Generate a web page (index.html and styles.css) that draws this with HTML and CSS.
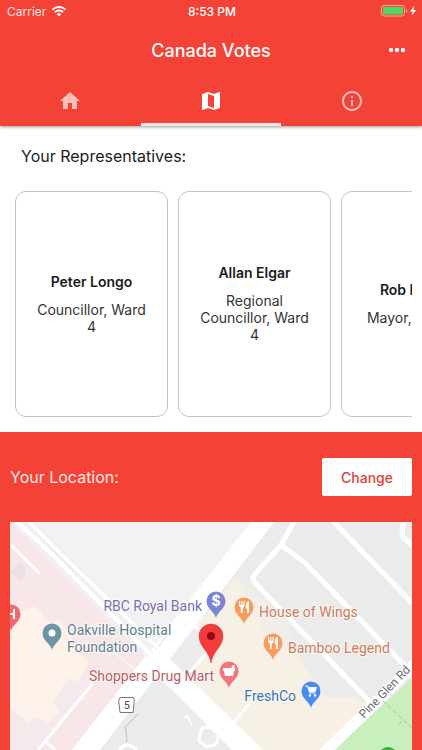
FILE: index.html
```html
<!DOCTYPE html>
<html lang="en">
<head>
  <meta charset="UTF-8" />
  <meta name="viewport" content="width=device-width, initial-scale=1.0" />
  <title>Canada Votes</title>
  <link rel="stylesheet" href="styles.css">
</head>
<body>
  <header class="app-header">
    <div class="status-bar">
      <div class="carrier">
        <span>Carrier</span>
        <svg width="16" height="12" viewBox="0 0 16 12">
          <g fill="none" stroke="#fff" stroke-width="2">
            <path d="M1.5 4.6a9.2 9.2 0 0 1 13 0" />
            <path d="M4 7.2a5.7 5.7 0 0 1 8 0" />
          </g>
          <path d="M8 11.5L5.8 9.2a3.1 3.1 0 0 1 4.4 0z" fill="#fff" />
        </svg>
      </div>
      <div class="clock">8:53 PM</div>
      <div class="battery">
        <svg width="36" height="12" viewBox="0 0 36 12">
          <rect x="0.5" y="0.5" width="23" height="10.5" rx="2.5" fill="none" stroke="#fba79e" />
          <rect x="2" y="2" width="20" height="7.5" rx="1" fill="#4cd964" />
          <path d="M25 4v4q1.300-.6 1.300-2T25 4z" fill="#fba79e" />
          <path d="M33.300 1L29 6.500h2.600L30.700 10.700 35.200 5h-2.800z" fill="#fff" />
        </svg>
      </div>
    </div>

    <div class="title-bar">
      <h1>Canada Votes</h1>
      <button class="more" aria-label="More">
        <svg width="18" height="6" viewBox="0 0 18 6" fill="#fff">
          <circle cx="3" cy="3" r="2.2" />
          <circle cx="9" cy="3" r="2.2" />
          <circle cx="15" cy="3" r="2.2" />
        </svg>
      </button>
    </div>

    <nav class="tabs">
      <a href="#home" aria-label="Home">
        <svg width="24" height="24" viewBox="0 0 24 24"><path d="M10 20v-6h4v6h5v-8h3L12 3 2 12h3v8z" /></svg>
      </a>
      <a href="#map" class="active" aria-label="Map">
        <svg width="24" height="24" viewBox="0 0 24 24"><path d="M20.500 3l-.16.030L15 5.100 9 3 3.360 4.900c-.21.070-.36.250-.36.480V20.500c0 .28.220.5.500.5l.16-.030L9 18.900l6 2.100 5.640-1.900c.21-.070.360-.250.360-.48V3.500c0-.28-.22-.5-.5-.5zM15 19l-6-2.110V5l6 2.110V19z" /></svg>
      </a>
      <a href="#info" aria-label="Info">
        <svg width="24" height="24" viewBox="0 0 24 24"><path d="M11 17h2v-6h-2v6zm1-15C6.480 2 2 6.480 2 12s4.480 10 10 10 10-4.480 10-10S17.520 2 12 2zm0 18c-4.410 0-8-3.590-8-8s3.590-8 8-8 8 3.590 8 8-3.590 8-8 8zM11 9h2V7h-2v2z" /></svg>
      </a>
    </nav>
  </header>

  <main>
    <section class="representatives">
      <h2>Your Representatives:</h2>
      <div class="card-row">
        <article class="card">
          <h3>Peter Longo</h3>
          <p>Councillor, Ward 4</p>
        </article>
        <article class="card">
          <h3>Allan Elgar</h3>
          <p>Regional Councillor, Ward 4</p>
        </article>
        <article class="card">
          <h3>Rob Burton</h3>
          <p>Mayor, Oakville</p>
        </article>
      </div>
    </section>

    <section class="location">
      <div class="location-bar">
        <h2>Your Location:</h2>
        <button class="change">Change</button>
      </div>

      <svg class="map" viewBox="0 0 402 228">
        <defs>
          <path id="pin" d="M0 17C-1 11-9.500 8-9.500 0a9.500 9.500 0 0 1 19 0C9.500 8 1 11 0 17z" />
          <g id="fork" fill="#fff">
            <path d="M-5-6h1.200v4h1v-4h1.200v4h1v-4H.6v4.500Q.4 0-1.200.4V6h-2V.4Q-4.800 0-5-1.500z" />
            <path d="M5-6v12H3V1.500H1.800V-3Q2.200-5.500 5-6z" />
          </g>
        </defs>

        <!-- blocks -->
        <rect width="402" height="228" fill="#f2f2f2" />
        <path d="M264 0H402V228H90L162 136z" fill="#ebebeb" />
        <path d="M0 0L137 136 62 228H0z" fill="#f7e7e9" />
        <path d="M83 158L28 228H0V140z" fill="#f4eaec" />
        <path d="M0 93l25-9 16 18 7-5 14 16-2 10 19 17-11 20-10-4-15 24 6 10-11 11-11-6-9 6-11-10-7-5z" fill="#fef3ea" />
        <path d="M4 45l6-6 5 5v10l-5 5-10-9z" fill="#e9e1e4" />
        <path d="M226 55l25 50 43 38 22 32q10 2 28 0l15 8-48 45h-60L190 168l-8-16 18-22-16-25z" fill="#f7f0e4" />
        <path d="M226 55l22 48 46 40-20-50z" fill="#f7f0e4" opacity="0.5" />
        <path d="M402 156V228H324z" fill="#c9efbd" />

        <!-- roads -->
        <path d="M241 0h23L90 228H62z" fill="#fff" />
        <path d="M134 130L155 132 253 228H222L140 146z" fill="#fff" />
        <path d="M148 125l9-12" stroke="#dedede" />
        <g fill="none" stroke="#e6e4e5">
          <path d="M3-4L45 35 141 133" stroke-width="6" />
          <path d="M15-4L50 31 148 126" stroke-width="5" />
        </g>
        <g fill="none" stroke="#fff">
          <path d="M3-4L45 35 141 133" stroke-width="5" />
          <path d="M15-4L50 31 148 126" stroke-width="4" />
        </g>
        <g fill="none" stroke="#fff" stroke-width="3" stroke-linejoin="round">
          <path d="M0 22l29 29" stroke-linecap="round" />
          <path d="M83 161L28 228M34 219l12 9" />
          <path d="M98 126l28 22" stroke-width="1" />
          <path d="M223 201l17-20M183 103l12 9M180 150l22-25" />
          <path d="M182 203l-5-9-3 2" stroke-width="2" />
          <path d="M213 201l20 20M190 211l3-6 10 1 6 6-3 10-9 3-8-6zM109 228q8-10 18 0" />
        </g>
        <g fill="none" stroke="#fff" stroke-width="5" stroke-linejoin="round">
          <path d="M285-2L271 23l-26 29q-4 5 0 9L363 183" />
          <path d="M271 23l23 17L397 146M322-2l80 83M394-2l-2 12q0 4 3 7l8 7" />
        </g>
        <path d="M312 233L406 141" stroke="#fff" stroke-width="11" />
        <path d="M128 193q2-3-7 6t-5 8l1 13" fill="none" stroke="#a9cfae" />
        <path d="M373 179l29 27M389 202l4-4" fill="none" stroke="#9db897" stroke-dasharray="4 3" />

        <!-- route shield -->
        <path d="M110 175.500h13.500l.8 3-1.200 12H110l-1.300-12z" fill="#fff" stroke="#777" />
        <text class="shield" x="117" y="187">5</text>

        <!-- places -->
        <g class="places">
          <text x="192" y="89" fill="#6f74ad" text-anchor="end">RBC Royal Bank</text>
          <text x="57" y="113" fill="#5f7f8d">Oakville Hospital</text>
          <text x="57" y="130" fill="#5f7f8d">Foundation</text>
          <text x="204" y="159" fill="#bf5b61" text-anchor="end">Shoppers Drug Mart</text>
          <text x="249" y="95" fill="#cf7b55">House of Wings</text>
          <text x="278" y="131" fill="#cf7b55">Bamboo Legend</text>
          <text x="286" y="179" fill="#3b73b9" text-anchor="end">FreshCo</text>
          <text class="street" transform="translate(354 197) rotate(-46)">Pine Glen Rd</text>
        </g>

        <g transform="translate(1 92)">
          <use href="#pin" fill="#f0696f" />
          <path d="M-4-5v10M3-5v10M-4 0h7" stroke="#fff" stroke-width="2" />
        </g>
        <g transform="translate(42 111)">
          <use href="#pin" fill="#6c96a8" />
          <circle r="3.500" fill="#fff" />
        </g>
        <g transform="translate(206 79)">
          <use href="#pin" fill="#7c84d6" />
          <text class="dollar" y="5">$</text>
        </g>
        <g transform="translate(234 85)">
          <use href="#pin" fill="#fb9a5c" />
          <use href="#fork" />
        </g>
        <g transform="translate(263 121)">
          <use href="#pin" fill="#fb9a5c" />
          <use href="#fork" />
        </g>
        <g transform="translate(219 149)">
          <use href="#pin" fill="#f2777c" />
          <path d="M-6-3H2L4-6l2 1-1 2h1v3H5L4 5H-4L-5 0h-1z" fill="#fff" />
        </g>
        <g transform="translate(301 169)">
          <use href="#pin" fill="#458df0" />
          <path d="M-6-5h2.500L-1 2h5.500" fill="none" stroke="#fff" stroke-width="1.200" />
          <path d="M-3-4h9L4.500 1h-6z" fill="#fff" />
          <circle cx="-1" cy="4.500" r="1.200" fill="#fff" />
          <circle cx="4" cy="4.500" r="1.200" fill="#fff" />
        </g>
        <circle cx="378" cy="235" r="10" fill="#3fae3f" />

        <!-- current location -->
        <g transform="translate(201 114)">
          <path d="M0 27C-1 16-12 11-12 0a12 12 0 0 1 24 0C12 11 1 16 0 27z" fill="#f33b3c" stroke="#dc2b2d" stroke-width="0.500" />
          <circle r="4" fill="#8c0c10" />
        </g>
      </svg>
    </section>
  </main>
</body>
</html>
```
FILE: styles.css
```css
:root {
  --red: #f44336;
  --gap: 10px;
}

* {
  box-sizing: border-box;
  margin: 0;
  padding: 0;
  font-family: Inter, "Liberation Sans", sans-serif;
}

body {
  display: flex;
  flex-direction: column;
  min-height: 100vh;
  background: #fff;
  color: #1c1c1c;
}

button {
  border: none;
  cursor: pointer;
}

svg {
  display: block;
}

/* header */
.app-header {
  background: var(--red);
  color: #fff;
  box-shadow: 0 1px 3px rgba(0, 0, 0, 0.4);
  position: relative;
  z-index: 1;
}

.status-bar {
  display: grid;
  grid-template-columns: 1fr auto 1fr;
  align-items: center;
  height: 22px;
  padding: 0 5px 0 7px;
  font-size: 12px;
}

.carrier {
  display: flex;
  align-items: center;
  gap: 5px;
  color: #ffe3e0;
}

.clock {
  font-weight: 500;
}

.battery {
  justify-self: end;
}

.title-bar {
  display: grid;
  grid-template-columns: 1fr auto 1fr;
  align-items: center;
  height: 56px;
  padding: 0 16px;
}

.title-bar h1 {
  grid-column: 2;
  font-size: 18px;
  font-weight: 500;
}

.more {
  justify-self: end;
  background: none;
}

.tabs {
  display: flex;
}

.tabs a {
  flex: 1;
  display: flex;
  justify-content: center;
  align-items: center;
  height: 48px;
  padding-top: 1px;
  border-bottom: 3px solid transparent;
}

.tabs svg {
  fill: #fcc0bb;
}

.tabs .active {
  border-bottom-color: #fbe9e8;
}

.tabs .active svg {
  fill: #fff;
}

main {
  flex: 1;
  display: flex;
  flex-direction: column;
}

/* representatives */
.representatives {
  padding: 20px var(--gap) 15px;
}

h2 {
  font-size: 16px;
  font-weight: 400;
  line-height: 20px;
}

.representatives h2 {
  padding: 0 11px;
}

.card-row {
  display: flex;
  gap: var(--gap);
  margin-top: 25px;
  padding: 0 5px;
  overflow-x: auto;
  scrollbar-width: none;
}

.card {
  flex: 0 0 153px;
  display: flex;
  flex-direction: column;
  justify-content: center;
  gap: 11px;
  height: 226px;
  padding: 0 16px 1px;
  border: 1px solid #c4c4c4;
  border-radius: 11px;
  font-size: 14px;
  line-height: 17px;
  text-align: center;
}

.card h3 {
  font-size: 14px;
  font-weight: 600;
}

.card p {
  color: #333;
}

/* location */
.location {
  flex: 1;
  padding: 26px var(--gap) 0;
  background: var(--red);
  color: #fff;
}

.location-bar {
  display: flex;
  justify-content: space-between;
  align-items: center;
  margin-bottom: 26px;
}

.location-bar h2 {
  color: #ffebe9;
}

.change {
  width: 90px;
  height: 38px;
  border-radius: 2px;
  background: #fff;
  color: #dc4238;
  font-size: 14px;
  font-weight: 500;
}

.map {
  width: 100%;
  height: auto;
}

.places text {
  font-family: Roboto, "Liberation Sans", sans-serif;
  font-size: 14px;
  stroke: #fff;
  stroke-width: 2px;
  stroke-opacity: 0.7;
  paint-order: stroke;
}

.places .street {
  font-size: 12px;
  fill: #666b73;
}

.shield {
  font-size: 10px;
  font-weight: 500;
  fill: #555;
  text-anchor: middle;
}

.dollar {
  font-size: 14px;
  font-weight: 700;
  fill: #fff;
  text-anchor: middle;
}
```
